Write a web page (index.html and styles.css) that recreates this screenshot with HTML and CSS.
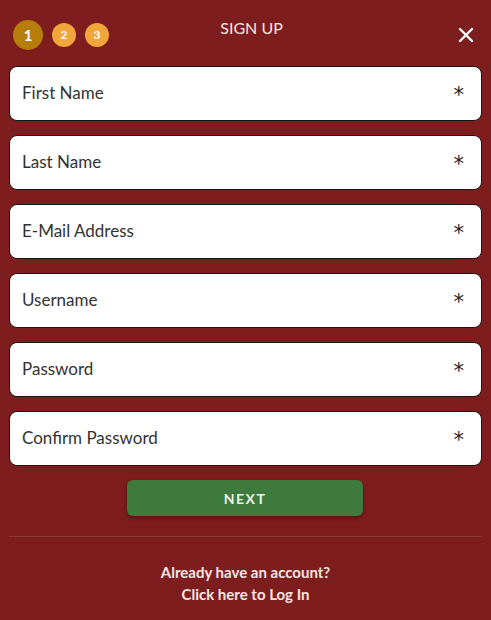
FILE: index.html
```html
<!DOCTYPE html>
<html>
<head>
  <title>Sign Up</title>
  <link rel="stylesheet" href="styles.css">
</head>
<body>
  <div class="modal">
    <div class="header">
      <div class="steps">
        <span class="step active">1</span>
        <span class="step">2</span>
        <span class="step">3</span>
      </div>
      <h2>SIGN UP</h2>
      <button class="close" aria-label="Close">
        <svg width="16" height="16" viewBox="0 0 16 16"><path d="M2 2 L14 14 M14 2 L2 14" stroke="#fff" stroke-width="2.4" stroke-linecap="round"/></svg>
      </button>
    </div>

    <form class="fields">
      <label class="field"><input type="text" placeholder="First Name"><span class="req">*</span></label>
      <label class="field"><input type="text" placeholder="Last Name"><span class="req">*</span></label>
      <label class="field"><input type="email" placeholder="E-Mail Address"><span class="req">*</span></label>
      <label class="field"><input type="text" placeholder="Username"><span class="req">*</span></label>
      <label class="field"><input type="password" placeholder="Password"><span class="req">*</span></label>
      <label class="field"><input type="password" placeholder="Confirm Password"><span class="req">*</span></label>
      <button type="button" class="next">NEXT</button>
    </form>

    <div class="footer">
      <p>Already have an account?</p>
      <a href="#">Click here to Log In</a>
    </div>
  </div>
</body>
</html>
```

FILE: styles.css
```css
body {
  margin: 0;
  padding: 0;
  background-color: #7e1d1e;
  font-family: Lato, "Open Sans", sans-serif;
}

.modal {
  width: 491px;
  height: 620px;
  box-sizing: border-box;
  padding: 0 9px;
  background-color: #7e1d1e;
}

.header {
  height: 66px;
  display: flex;
  align-items: center;
  justify-content: space-between;
  position: relative;
}

.steps {
  display: flex;
  align-items: center;
  gap: 9px;
  padding-left: 4px;
  padding-top: 3px;
}

.step {
  width: 24px;
  height: 24px;
  border-radius: 50%;
  background-color: #f0a63a;
  color: #fff;
  font-size: 12px;
  font-weight: bold;
  display: flex;
  align-items: center;
  justify-content: center;
}

.step.active {
  width: 30px;
  height: 30px;
  background-color: #b67d0b;
  font-size: 15px;
}

h2 {
  position: absolute;
  left: 0;
  right: 0;
  top: 18px;
  margin: 0;
  text-align: center;
  font-size: 16px;
  font-weight: normal;
  color: #f6e6e4;
  pointer-events: none;
  padding-left: 12px;
}

.close {
  background: none;
  border: none;
  padding: 0;
  margin-right: 8px;
  margin-top: 4px;
  cursor: pointer;
  display: flex;
}

.fields {
  display: flex;
  flex-direction: column;
  gap: 14px;
  margin: 0;
}

.field {
  display: flex;
  align-items: center;
  height: 55px;
  box-sizing: border-box;
  background-color: #fff;
  border: 1px solid #1f1414;
  border-radius: 8px;
  padding: 0 17px 3px 12px;
}

.field input {
  flex: 1;
  border: none;
  outline: none;
  font-family: inherit;
  font-size: 17px;
  color: #333;
  background: transparent;
  padding: 0;
}

.field input::placeholder {
  color: #333;
}

.req {
  font-family: "DejaVu Sans", sans-serif;
  font-size: 21px;
  color: #222;
  line-height: 1;
  padding-top: 7px;
}

.next {
  align-self: center;
  width: 236px;
  height: 36px;
  margin-left: -1px;
  border: none;
  border-radius: 6px;
  background-color: #3d7a3c;
  color: #eef4e8;
  font-family: inherit;
  font-size: 14px;
  font-weight: bold;
  letter-spacing: 1.5px;
  box-shadow: 0 2px 4px rgba(0, 0, 0, 0.35);
  cursor: pointer;
}

.footer {
  margin-top: 20px;
  border-top: 1px solid rgba(255, 255, 255, 0.12);
  padding-top: 24px;
  text-align: center;
  color: #f6e6e4;
  font-size: 15px;
  font-weight: bold;
  line-height: 22px;
}

.footer p {
  margin: 0;
}

.footer a {
  color: #f6e6e4;
  text-decoration: none;
}
```
